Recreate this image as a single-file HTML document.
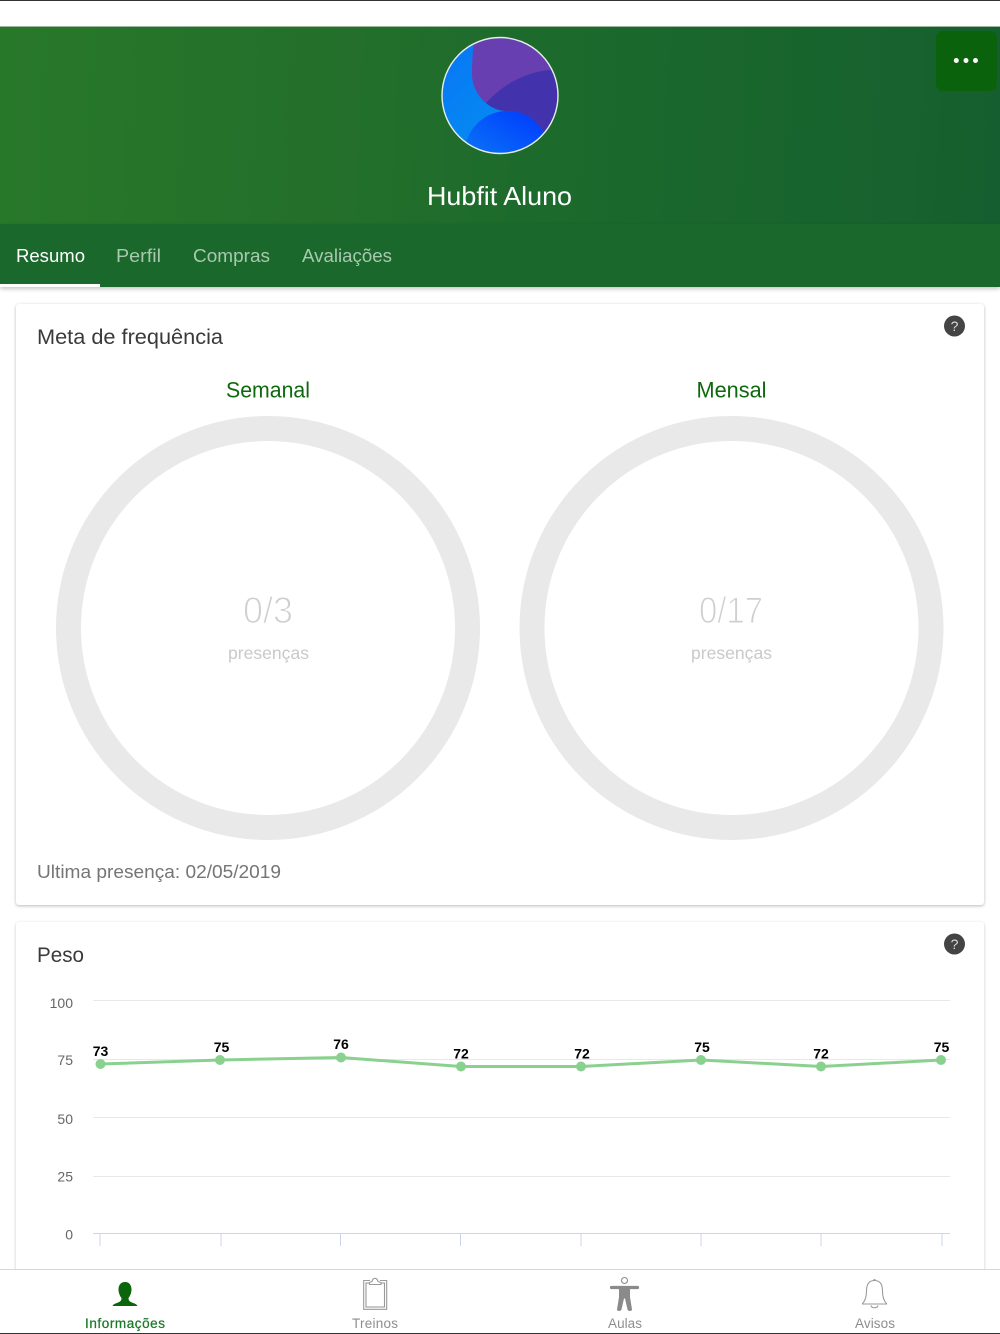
<!DOCTYPE html>
<html lang="pt"><head><meta charset="utf-8"><title>Hubfit Aluno</title>
<style>
html,body{margin:0;padding:0;background:#fff;width:1000px;height:1334px;overflow:hidden}
body{position:relative;font-family:"Liberation Sans",sans-serif}
.a{position:absolute}
svg{position:absolute;left:0;top:0}
text{font-family:"Liberation Sans",sans-serif}
</style></head><body>
<div class="a" style="left:0;top:0;width:1000px;height:1px;background:#333"></div>
<div class="a" style="left:0;top:26px;width:1000px;height:1px;background:#9cb89c"></div>
<div class="a" style="left:0;top:27px;width:1000px;height:197px;background:linear-gradient(93deg,#28782a 0%,#236f2b 35%,#1c6a2c 55%,#17622e 90%,#155e2f 100%)"></div>
<div class="a" style="left:0;top:224px;width:1000px;height:63px;background:#1a682c;box-shadow:0 2px 4px rgba(0,0,0,.22)"></div>
<div class="a" style="left:0;top:284px;width:100px;height:3px;background:#fff"></div>
<div class="a" style="left:936px;top:31px;width:61px;height:60px;border-radius:7px;background:#0b620c"></div>
<div class="a" style="left:16px;top:304px;width:968px;height:601px;border-radius:3px;background:#fff;box-shadow:0 1px 3px rgba(0,0,0,.28)"></div>
<div class="a" style="left:16px;top:922px;width:968px;height:360px;border-radius:3px;background:#fff;box-shadow:0 1px 3px rgba(0,0,0,.22)"></div>
<div class="a" style="left:0;top:1269px;width:1000px;height:64px;background:#fff;border-top:1px solid #d8d8d8;box-sizing:border-box"></div>
<div class="a" style="left:0;top:1333px;width:1000px;height:1px;background:#333"></div>

<svg width="1000" height="1334" viewBox="0 0 1000 1334" xmlns="http://www.w3.org/2000/svg">
<defs>
<clipPath id="av"><circle cx="500" cy="95.5" r="57.5"/></clipPath>
<linearGradient id="b1" x1="0" y1="0" x2="1" y2="1"><stop offset="0" stop-color="#0a74f5"/><stop offset="1" stop-color="#0098f0"/></linearGradient>
<linearGradient id="b2" x1="0" y1="1" x2="1" y2="0"><stop offset="0" stop-color="#0a78f5"/><stop offset="1" stop-color="#0038ff"/></linearGradient>
</defs>
<g clip-path="url(#av)">
<rect x="440" y="36" width="120" height="120" fill="url(#b1)"/>
<path d="M474 36C473 50 472 62 472 74C472 92 487 111 507 111C525 111 536 120 543 132L562 132L562 36Z" fill="#683fb0"/>
<path d="M486 103C503 84 526 72 550 70L562 70L562 140L543 132C536 120 525 111 507 111C499 111 492 108 486 103Z" fill="#4232ac"/>
<path d="M466 142C472 124 488 111 507 111C525 111 536 120 544 133L520 160L470 160Z" fill="url(#b2)"/>
</g>
<circle cx="500" cy="95.5" r="58" fill="none" stroke="#e6eee8" stroke-width="1.4"/>
<text x="427" y="205" font-size="26" fill="#fff" textLength="145" lengthAdjust="spacingAndGlyphs">Hubfit Aluno</text>
<circle cx="956.3" cy="60.5" r="2.5" fill="#fff"/><circle cx="966" cy="60.5" r="2.5" fill="#fff"/><circle cx="975.5" cy="60.5" r="2.5" fill="#fff"/>

<g font-size="18.5">
<text x="16" y="262" fill="#fff" textLength="69" lengthAdjust="spacingAndGlyphs">Resumo</text>
<text x="116" y="262" fill="#a9c9ae" textLength="45" lengthAdjust="spacingAndGlyphs">Perfil</text>
<text x="193" y="262" fill="#a9c9ae" textLength="77" lengthAdjust="spacingAndGlyphs">Compras</text>
<text x="302" y="262" fill="#a9c9ae" textLength="90" lengthAdjust="spacingAndGlyphs">Avaliações</text>
</g>

<text x="37" y="344" font-size="21.5" fill="#3a3a3a" textLength="186" lengthAdjust="spacingAndGlyphs">Meta de frequência</text>
<circle cx="954.5" cy="326" r="10.5" fill="#444"/>
<text x="954.5" y="331" font-size="14" fill="#ddd" text-anchor="middle">?</text>

<text x="226" y="397.500" font-size="22" fill="#0d690d" textLength="84" lengthAdjust="spacingAndGlyphs">Semanal</text>
<text x="696.500" y="397.500" font-size="22" fill="#0d690d" textLength="70" lengthAdjust="spacingAndGlyphs">Mensal</text>
<circle cx="268" cy="628" r="199.5" fill="none" stroke="#e9e9e9" stroke-width="25"/>
<circle cx="731.5" cy="628" r="199.5" fill="none" stroke="#e9e9e9" stroke-width="25"/>
<g font-size="37" fill="#cfcfcf" stroke="#fff" stroke-width="1.100" paint-order="normal">
<text x="243" y="623" textLength="50" lengthAdjust="spacingAndGlyphs">0/3</text>
<text x="699" y="623" textLength="64" lengthAdjust="spacingAndGlyphs">0/17</text>
</g>
<text x="228" y="659" font-size="17.5" fill="#c9c9c9" textLength="81" lengthAdjust="spacingAndGlyphs">presenças</text>
<text x="691" y="659" font-size="17.5" fill="#c9c9c9" textLength="81" lengthAdjust="spacingAndGlyphs">presenças</text>
<text x="37" y="878" font-size="18.5" fill="#757575" textLength="244" lengthAdjust="spacingAndGlyphs">Ultima presença: 02/05/2019</text>

<text x="37" y="962" font-size="21.5" fill="#3a3a3a" textLength="47" lengthAdjust="spacingAndGlyphs">Peso</text>
<circle cx="954.5" cy="944" r="10.5" fill="#444"/>
<text x="954.5" y="949" font-size="14" fill="#ddd" text-anchor="middle">?</text>

<g stroke="#e8e8e8" stroke-width="1">
<line x1="93" x2="950" y1="1000.5" y2="1000.5"/>
<line x1="93" x2="950" y1="1059.5" y2="1059.5"/>
<line x1="93" x2="950" y1="1117.5" y2="1117.5"/>
<line x1="93" x2="950" y1="1176.5" y2="1176.5"/>
</g>
<g stroke="#ccd6eb" stroke-width="1">
<line x1="93" x2="950" y1="1233.5" y2="1233.5"/>
<line x1="100" x2="100" y1="1234" y2="1246"/>
<line x1="221" x2="221" y1="1234" y2="1246"/>
<line x1="340.5" x2="340.5" y1="1234" y2="1246"/>
<line x1="460.5" x2="460.5" y1="1234" y2="1246"/>
<line x1="581" x2="581" y1="1234" y2="1246"/>
<line x1="701" x2="701" y1="1234" y2="1246"/>
<line x1="821" x2="821" y1="1234" y2="1246"/>
<line x1="942" x2="942" y1="1234" y2="1246"/>
</g>
<g font-size="14" fill="#666" text-anchor="end">
<text x="73" y="1008">100</text><text x="73" y="1065">75</text><text x="73" y="1124">50</text><text x="73" y="1181.500">25</text><text x="73" y="1239.500">0</text>
</g>
<polyline points="100.5,1064 220,1060 341,1057.5 461,1066.5 581,1066.5 701,1060 821,1066.5 941,1060" fill="none" stroke="#8ad18f" stroke-width="3"/>
<g fill="#8ad18f">
<circle cx="100.5" cy="1064" r="5"/><circle cx="220" cy="1060" r="5"/><circle cx="341" cy="1057.5" r="5"/><circle cx="461" cy="1066.5" r="5"/><circle cx="581" cy="1066.5" r="5"/><circle cx="701" cy="1060" r="5"/><circle cx="821" cy="1066.5" r="5"/><circle cx="941" cy="1060" r="5"/>
</g>
<g font-size="14" font-weight="700" fill="#000" text-anchor="middle">
<text x="100.5" y="1056">73</text><text x="221.5" y="1052">75</text><text x="341" y="1049">76</text><text x="461" y="1058.500">72</text><text x="582" y="1058.500">72</text><text x="702" y="1052">75</text><text x="821" y="1058.500">72</text><text x="941.5" y="1052">75</text>
</g>

<!-- tab bar icons -->
<path d="M125 1282C120.500 1282 118.500 1285.500 118.500 1289.500C118.500 1293 120 1296 121.500 1298C121.500 1300.500 120.500 1301.500 118 1302.500C115.500 1303.500 113.500 1304 112.500 1306L137.500 1306C136.500 1304 134.500 1303.500 132 1302.500C129.500 1301.500 128.500 1300.500 128.500 1298C130 1296 131.500 1293 131.500 1289.500C131.500 1285.500 129.500 1282 125 1282Z" fill="#0b650b"/>

<g fill="none" stroke="#9a9a9a" stroke-width="1.1">
<path d="M370 1280.500H363.700V1309.300H386.700V1280.500H380"/>
<rect x="366" y="1283" width="18.500" height="24"/>
<path d="M369.500 1284.500V1282.500L372 1281.500C372.500 1279.500 373.500 1278.300 375 1278.300C376.500 1278.300 377.500 1279.500 378 1281.500L381 1282.500V1284.500Z" fill="#fff"/>
</g>

<circle cx="624.5" cy="1280.500" r="3" fill="none" stroke="#8a8a8a" stroke-width="1.1"/>
<path d="M611.500 1287.500H637.500" stroke="#8a8a8a" stroke-width="3.200" stroke-linecap="round" fill="none"/>
<path d="M619 1288V1297L617 1309.500C617 1311.500 621 1311.500 621.500 1309.500L624 1298.500H625L627.500 1309.500C628 1311.500 632 1311.500 632 1309.500L630 1297V1288Z" fill="#8a8a8a"/>

<g fill="none" stroke="#9a9a9a" stroke-width="1.1">
<path d="M874.500 1280.500C868.500 1280.500 866.500 1285 866.500 1291C866.500 1298 864.500 1301.500 862.500 1303.500V1304H886.500V1303.500C884.500 1301.500 882.500 1298 882.500 1291C882.500 1285 880.500 1280.500 874.500 1280.500Z"/>
<path d="M871 1305.500C871.500 1308.500 877.500 1308.500 878 1305.500"/>
</g>
<circle cx="874.500" cy="1280" r="1.100" fill="#9a9a9a"/>

<text x="85" y="1328" font-size="13.500" font-weight="400" fill="#1b7a28" stroke="#1b7a28" stroke-width=".25" textLength="80" lengthAdjust="spacing">Informações</text>
<text x="352" y="1328" font-size="13.500" fill="#8e8e8e" textLength="46" lengthAdjust="spacing">Treinos</text>
<text x="608" y="1328" font-size="13.500" fill="#8e8e8e" textLength="34" lengthAdjust="spacing">Aulas</text>
<text x="855" y="1328" font-size="13.500" fill="#8e8e8e" textLength="40" lengthAdjust="spacing">Avisos</text>
</svg>
</body></html>
